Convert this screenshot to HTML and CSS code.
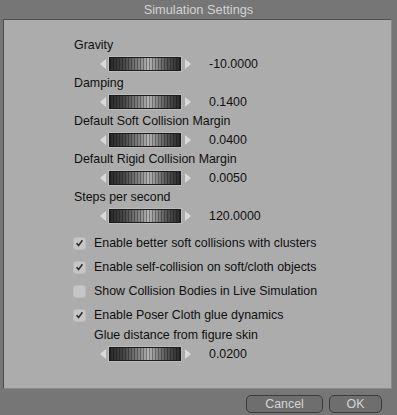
FILE: index.html
```html
<!DOCTYPE html>
<html>
<head>
<meta charset="utf-8">
<link rel="stylesheet" href="styles.css">
</head>
<body>
<div class="window">
  <div class="titlebar">Simulation Settings</div>
  <div class="panel">
    <div class="field">
      <div class="label">Gravity</div>
      <div class="slider-row"><span class="arrow left"></span><span class="track"></span><span class="arrow right"></span><span class="value">-10.0000</span></div>
    </div>
    <div class="field">
      <div class="label">Damping</div>
      <div class="slider-row"><span class="arrow left"></span><span class="track"></span><span class="arrow right"></span><span class="value">0.1400</span></div>
    </div>
    <div class="field">
      <div class="label">Default Soft Collision Margin</div>
      <div class="slider-row"><span class="arrow left"></span><span class="track"></span><span class="arrow right"></span><span class="value">0.0400</span></div>
    </div>
    <div class="field">
      <div class="label">Default Rigid Collision Margin</div>
      <div class="slider-row"><span class="arrow left"></span><span class="track"></span><span class="arrow right"></span><span class="value">0.0050</span></div>
    </div>
    <div class="field">
      <div class="label">Steps per second</div>
      <div class="slider-row"><span class="arrow left"></span><span class="track"></span><span class="arrow right"></span><span class="value">120.0000</span></div>
    </div>
    <div class="checks">
      <div class="check"><span class="box"><svg width="12" height="12" viewBox="0 0 12 12"><polyline points="2.8,6.2 5,8.6 9.2,3" fill="none" stroke="#2e2e2e" stroke-width="1.8"/></svg></span><span>Enable better soft collisions with clusters</span></div>
      <div class="check"><span class="box"><svg width="12" height="12" viewBox="0 0 12 12"><polyline points="2.8,6.2 5,8.6 9.2,3" fill="none" stroke="#2e2e2e" stroke-width="1.8"/></svg></span><span>Enable self-collision on soft/cloth objects</span></div>
      <div class="check"><span class="box"></span><span>Show Collision Bodies in Live Simulation</span></div>
      <div class="check"><span class="box"><svg width="12" height="12" viewBox="0 0 12 12"><polyline points="2.8,6.2 5,8.6 9.2,3" fill="none" stroke="#2e2e2e" stroke-width="1.8"/></svg></span><span>Enable Poser Cloth glue dynamics</span></div>
    </div>
    <div class="field glue">
      <div class="label">Glue distance from figure skin</div>
      <div class="slider-row"><span class="arrow left"></span><span class="track"></span><span class="arrow right"></span><span class="value">0.0200</span></div>
    </div>
  </div>
  <div class="footer">
    <button class="btn cancel">Cancel</button>
    <button class="btn ok">OK</button>
  </div>
</div>
</body>
</html>
```
FILE: styles.css
```css
html, body {
  margin: 0;
  padding: 0;
  background: #767676;
}
body {
  font-family: "Liberation Sans", Arial, sans-serif;
  font-size: 12.4px;
  color: #101010;
}
.window {
  width: 397px;
  height: 415px;
  display: flex;
  flex-direction: column;
}
.titlebar {
  height: 19px;
  line-height: 20px;
  text-align: center;
  color: #d2d2d2;
  font-size: 12.8px;
}
.panel {
  margin-left: 3px;
  width: 389px;
  height: 370px;
  box-sizing: border-box;
  background: #acacac;
  border-top: 1px solid #4e4e4e;
  border-left: 1px solid #4e4e4e;
  border-right: 1px solid #8a8a8a;
  border-bottom: 1px solid #8a8a8a;
  padding: 17px 0 0 70px;
  display: flex;
  flex-direction: column;
}
.field {
  display: flex;
  flex-direction: column;
  gap: 2px;
  margin-bottom: 2px;
}
.label {
  height: 16px;
  line-height: 16px;
}
.slider-row {
  height: 18px;
  display: flex;
  align-items: center;
  padding-left: 26px;
}
.arrow {
  width: 0;
  height: 0;
  border-top: 5px solid transparent;
  border-bottom: 5px solid transparent;
}
.arrow.left {
  border-right: 6px solid #d9d9d9;
  margin-right: 3px;
}
.arrow.right {
  border-left: 6px solid #d9d9d9;
  margin-left: 4px;
}
.track {
  width: 72px;
  height: 14px;
  box-sizing: border-box;
  border: 1px solid #1c1c1c;
  box-shadow: 0 0 0 1px #bcbcbc;
  background:
    repeating-linear-gradient(90deg, rgba(0,0,0,0.3) 0 1px, transparent 1px 3px),
    linear-gradient(90deg, #2a2a2a 0%, #474747 20%, #8e8e8e 45%, #b4b4b4 55%, #585858 80%, #2a2a2a 100%);
}
.value {
  margin-left: 18px;
}
.checks {
  margin-top: 4px;
  display: flex;
  flex-direction: column;
}
.check {
  height: 24px;
  display: flex;
  align-items: center;
}
.box {
  width: 13px;
  height: 13px;
  box-sizing: border-box;
  background: #c6c6c6;
  border: 1px solid #bbbbbb;
  border-radius: 3px;
  margin-left: -1px;
  margin-right: 8px;
  display: flex;
  align-items: center;
  justify-content: center;
}
.box svg {
  display: block;
}
.glue .label {
  padding-left: 20px;
}
.footer {
  flex: 1;
  display: flex;
  justify-content: flex-end;
  align-items: flex-start;
  gap: 6px;
  padding: 6px 15px 0 0;
}
.btn {
  height: 18px;
  box-sizing: border-box;
  background: #6e6e6e;
  border: 1px solid #3c3c3c;
  border-radius: 5px;
  color: #d4d4d4;
  font-family: "Liberation Sans", Arial, sans-serif;
  font-size: 12.4px;
  padding: 0;
  line-height: 16px;
}
.btn.cancel {
  width: 77px;
}
.btn.ok {
  width: 53px;
}
```
